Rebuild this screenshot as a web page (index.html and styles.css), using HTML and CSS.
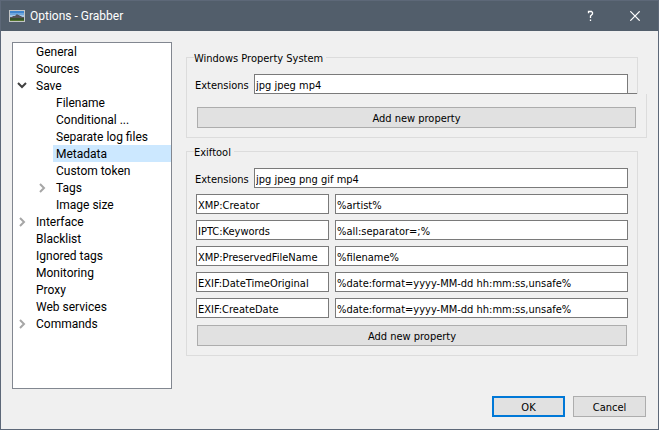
FILE: index.html
```html
<!DOCTYPE html>
<html lang="en">
<head>
<meta charset="utf-8">
<meta name="viewport" content="width=device-width, initial-scale=1">
<title>Options - Grabber</title>
<link rel="stylesheet" href="styles.css">
</head>
<body>
<div class="window">
  <header class="titlebar">
    <svg class="app-icon" width="16" height="12" viewBox="0 0 16 12" aria-hidden="true">
      <rect width="16" height="12" fill="#c3c5c6"/>
      <rect x="1" y="1" width="14" height="10" fill="#3f86cf"/>
      <path d="M1 3h14v2H1z" fill="#6fa6dc"/>
      <path d="M1 5h14v3H1z" fill="#a4c4e2"/>
      <path d="M1 7h2l1-1h2l2-2 1 1h1l1 1h1l1 1h2v2H1z" fill="#56535a"/>
      <path d="M1 8h14v3H1z" fill="#36522c"/>
      <path d="M1 10h14v1H1z" fill="#54742e"/>
    </svg>
    <h1 class="title">Options - Grabber</h1>
    <button class="caption" type="button" aria-label="Help">
      <svg width="10" height="12" viewBox="0 0 10 12" fill="none" stroke="#fff" stroke-width="1.3"><path d="M2.5 3.2V1.5H5.5L6.5 2.5V4L4.5 6V8M4.5 9.5V11"/></svg>
    </button>
    <button class="caption" type="button" aria-label="Close">
      <svg width="12" height="10" viewBox="0 0 12 10" fill="none" stroke="#fff" stroke-width="1.2"><path d="M.3.3l9.4 9.4M9.7.3L.3 9.7"/></svg>
    </button>
  </header>

  <main class="content">
    <nav class="tree" aria-label="Sections">
      <ul>
        <li><a href="#">General</a></li>
        <li><a href="#">Sources</a></li>
        <li><a href="#" class="open"><svg class="arrow" width="10" height="10" viewBox="0 0 10 10"><path d="M1 2l4 4 4-4"/></svg>Save</a>
          <ul>
            <li><a href="#">Filename</a></li>
            <li><a href="#">Conditional ...</a></li>
            <li><a href="#">Separate log files</a></li>
            <li><a href="#" class="selected" aria-current="page">Metadata</a></li>
            <li><a href="#">Custom token</a></li>
            <li><a href="#"><svg class="arrow" width="10" height="10" viewBox="0 0 10 10"><path d="M3 1l4 4-4 4"/></svg>Tags</a></li>
            <li><a href="#">Image size</a></li>
          </ul>
        </li>
        <li><a href="#"><svg class="arrow" width="10" height="10" viewBox="0 0 10 10"><path d="M3 1l4 4-4 4"/></svg>Interface</a></li>
        <li><a href="#">Blacklist</a></li>
        <li><a href="#">Ignored tags</a></li>
        <li><a href="#">Monitoring</a></li>
        <li><a href="#">Proxy</a></li>
        <li><a href="#">Web services</a></li>
        <li><a href="#"><svg class="arrow" width="10" height="10" viewBox="0 0 10 10"><path d="M3 1l4 4-4 4"/></svg>Commands</a></li>
      </ul>
    </nav>

    <form class="panel" id="options">
      <fieldset class="group group-split">
        <legend>Windows Property System</legend>
        <div class="field overhang">
          <label for="wps-ext">Extensions</label>
          <input id="wps-ext" type="text" value="jpg jpeg mp4">
        </div>
      </fieldset>
      <div class="group-tail">
        <button type="button" class="button">Add new property</button>
      </div>

      <fieldset class="group">
        <legend>Exiftool</legend>
        <div class="field">
          <label for="exif-ext">Extensions</label>
          <input id="exif-ext" type="text" value="jpg jpeg png gif mp4">
        </div>
        <div class="pair">
          <input type="text" aria-label="Property 1" value="XMP:Creator">
          <input type="text" aria-label="Value 1" value="%artist%">
        </div>
        <div class="pair">
          <input type="text" aria-label="Property 2" value="IPTC:Keywords">
          <input type="text" aria-label="Value 2" value="%all:separator=;%">
        </div>
        <div class="pair">
          <input type="text" aria-label="Property 3" value="XMP:PreservedFileName">
          <input type="text" aria-label="Value 3" value="%filename%">
        </div>
        <div class="pair">
          <input type="text" aria-label="Property 4" value="EXIF:DateTimeOriginal">
          <input type="text" aria-label="Value 4" value="%date:format=yyyy-MM-dd hh:mm:ss,unsafe%">
        </div>
        <div class="pair">
          <input type="text" aria-label="Property 5" value="EXIF:CreateDate">
          <input type="text" aria-label="Value 5" value="%date:format=yyyy-MM-dd hh:mm:ss,unsafe%">
        </div>
        <div class="action">
          <button type="button" class="button">Add new property</button>
        </div>
      </fieldset>
    </form>
  </main>

  <footer class="footer">
    <button type="submit" form="options" class="button primary">OK</button>
    <button type="button" class="button">Cancel</button>
  </footer>
</div>
</body>
</html>
```

FILE: styles.css
```css
* {
  box-sizing: border-box;
}

body {
  margin: 0;
  font: 11px/15px "DejaVu Sans Condensed", "DejaVu Sans", sans-serif;
  color: #000;
}

.window {
  display: flex;
  flex-direction: column;
  min-height: 100vh;
  border: 1px solid #5d6878;
  background: #f0f0f0;
}

.titlebar {
  display: flex;
  align-items: center;
  height: 30px;
  padding-left: 8px;
  background: #525e6b;
  color: #fff;
}

.title {
  flex: 1;
  margin: 0 0 0 5px;
  font: 12px/16px Roboto, sans-serif;
}

.caption {
  display: grid;
  place-items: center;
  width: 45px;
  height: 30px;
  padding: 0;
  border: 0;
  background: transparent;
}

.content {
  display: flex;
  flex: 1;
  gap: 14px;
  padding: 11px 11px 0;
}

.tree {
  flex: none;
  width: 160px;
  border: 1px solid #828790;
  background: #fff;
  font: 12px/15px Roboto, sans-serif;
}

.tree ul {
  margin: 0;
  padding: 0 0 0 20px;
  list-style: none;
}

.tree a {
  display: flex;
  align-items: center;
  height: 17px;
  padding: 2px 0 0 3px;
  color: #000;
  text-decoration: none;
  white-space: nowrap;
}

.tree .selected {
  background: #cce8ff;
}

.arrow {
  flex: none;
  margin: 0 9px 2px -19px;
  fill: none;
  stroke: #a6a6a6;
  stroke-width: 2;
}

.open .arrow {
  stroke: #404040;
}

.panel {
  flex: 1;
  min-width: 0;
  padding-top: 7px;
}

.group {
  min-width: 0;
  margin: 0 9px 0 0;
  padding: 8px 9px 9px 8px;
  border: 1px solid #dcdcdc;
}

.group legend {
  margin-left: -1px;
  padding: 2px 3px 0 0;
}

.group-split {
  padding-bottom: 0;
  border-bottom: 0;
}

.group-tail {
  margin-bottom: 5px;
  padding: 13px 10px 9px;
  border: 1px solid #dcdcdc;
  border-top: 0;
}

.field {
  display: grid;
  grid-template-columns: 59px 1fr;
  align-items: center;
}

.field label {
  padding-top: 2px;
}

/* The field's lower edge runs on to the frame of the group. */
.overhang {
  position: relative;
}

.overhang::after {
  content: "";
  position: absolute;
  bottom: 0;
  left: 100%;
  width: 9px;
  border-bottom: 1px solid #7a7a7a;
}

.pair {
  display: grid;
  grid-template-columns: 133px 1fr;
  gap: 6px;
  margin-top: 6px;
  padding-left: 1px;
}

input {
  width: 100%;
  min-width: 0;
  height: 20px;
  padding: 3px 1px 0;
  border: 1px solid #7a7a7a;
  border-radius: 0;
  background: #fff;
  color: #000;
  font: inherit;
}

.button {
  width: 100%;
  height: 21px;
  padding: 2px 0 0;
  border: 1px solid #adadad;
  background: #e1e1e1;
  color: #000;
  font: inherit;
}

.action {
  padding: 7px 1px 0 2px;
}

.footer {
  display: flex;
  justify-content: flex-end;
  gap: 8px;
  padding: 7px 12px 12px;
}

.footer .button {
  width: 73px;
}

.footer .primary {
  border: 2px solid #0078d7;
}
```
